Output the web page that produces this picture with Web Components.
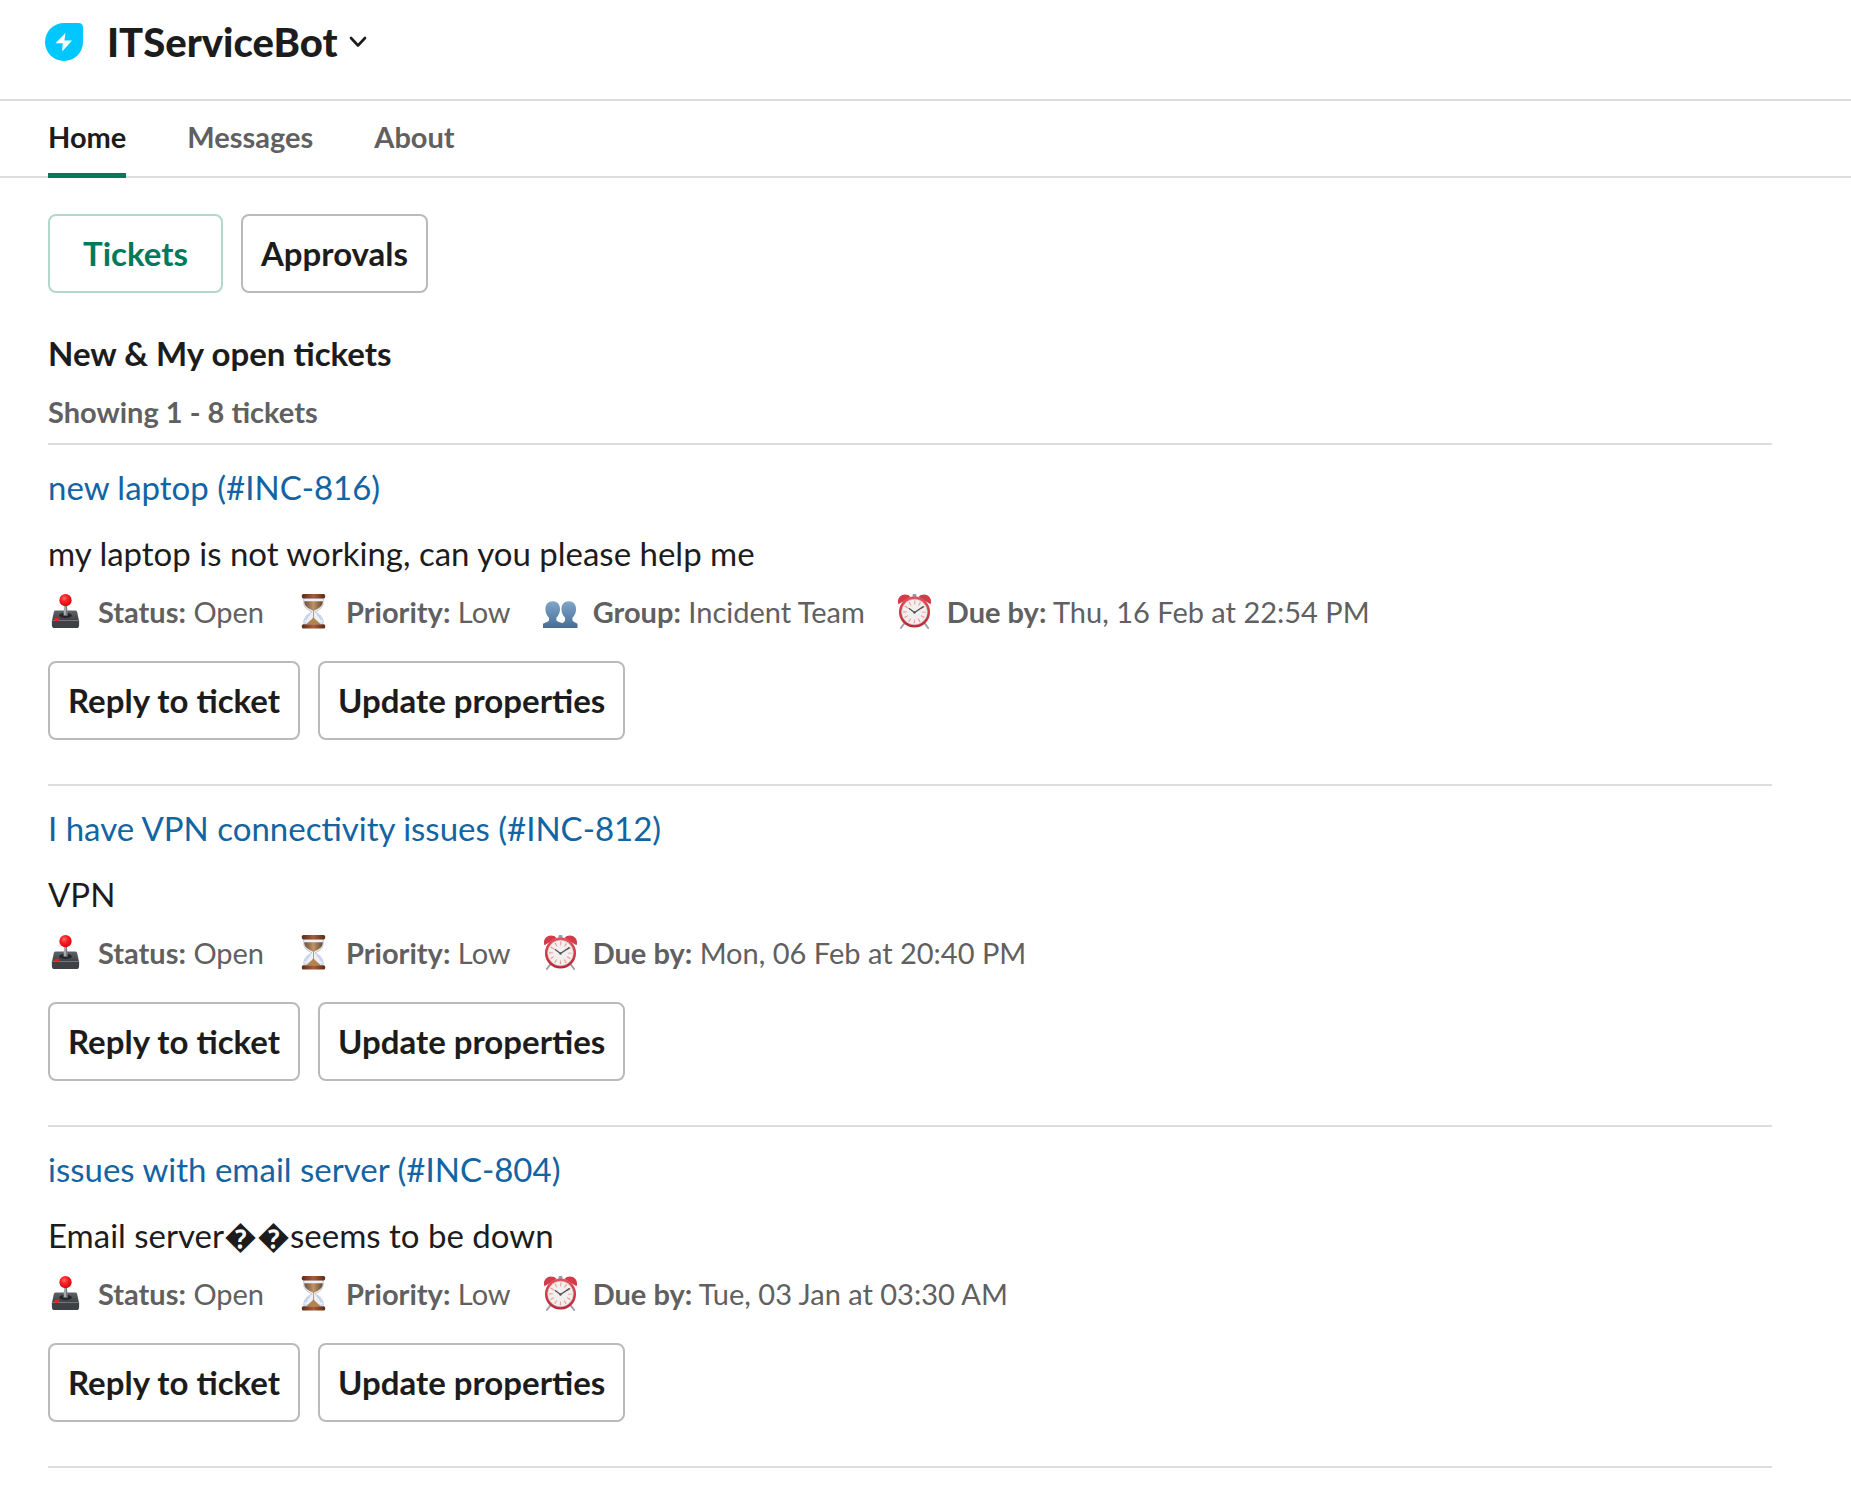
<!DOCTYPE html>
<html lang="en">
<head>
<meta charset="utf-8">
<meta name="viewport" content="width=device-width, initial-scale=1">
<title>ITServiceBot</title>
<style>
  body {
    margin: 0;
    background: #fff;
    color: #1d1c1d;
    font-family: Lato, "Noto Sans", sans-serif;
    font-size: 33px;
    line-height: 47px;
    --muted: #616061;
    --line: #dddddd;
    --green: #007a5a;
    --link: #1264a3;
  }
</style>
</head>
<body>
<bot-app>
  <bot-header slot="header">ITServiceBot</bot-header>
  <bot-tabs slot="tabs">
    <bot-tab active>Home</bot-tab>
    <bot-tab>Messages</bot-tab>
    <bot-tab>About</bot-tab>
  </bot-tabs>
  <button-row>
    <bot-button primary>Tickets</bot-button>
    <bot-button>Approvals</bot-button>
  </button-row>
  <list-heading>New &amp; My open tickets<span slot="count">Showing 1 - 8 tickets</span></list-heading>
  <ticket-item>
    <span slot="title">new laptop (#INC-816)</span>
    my laptop is not working, can you please help me
    <ticket-field slot="fields" icon="joystick" label="Status:">Open</ticket-field>
    <ticket-field slot="fields" icon="hourglass" label="Priority:">Low</ticket-field>
    <ticket-field slot="fields" icon="group" label="Group:">Incident Team</ticket-field>
    <ticket-field slot="fields" icon="clock" label="Due by:">Thu, 16 Feb at 22:54 PM</ticket-field>
  </ticket-item>
  <ticket-item>
    <span slot="title">I have VPN connectivity issues (#INC-812)</span>
    VPN
    <ticket-field slot="fields" icon="joystick" label="Status:">Open</ticket-field>
    <ticket-field slot="fields" icon="hourglass" label="Priority:">Low</ticket-field>
    <ticket-field slot="fields" icon="clock" label="Due by:">Mon, 06 Feb at 20:40 PM</ticket-field>
  </ticket-item>
  <ticket-item>
    <span slot="title">issues with email server (#INC-804)</span>
    Email server&#xFFFD;&#xFFFD;seems to be down
    <ticket-field slot="fields" icon="joystick" label="Status:">Open</ticket-field>
    <ticket-field slot="fields" icon="hourglass" label="Priority:">Low</ticket-field>
    <ticket-field slot="fields" icon="clock" label="Due by:">Tue, 03 Jan at 03:30 AM</ticket-field>
  </ticket-item>
</bot-app>

<script>
const define = (name, html, setup) => {
  const template = document.createElement('template');
  template.innerHTML = html;
  customElements.define(name, class extends HTMLElement {
    constructor() {
      super();
      this.attachShadow({ mode: 'open' }).append(template.content.cloneNode(true));
    }
    connectedCallback() { if (setup) setup(this, this.shadowRoot); }
  });
};

const ICONS = {
  joystick: `
    <defs>
      <radialGradient id="ball" cx=".4" cy=".35" r=".7"><stop offset="0" stop-color="#ff6a6a"/><stop offset=".4" stop-color="#fb2024"/><stop offset="1" stop-color="#d0060d"/></radialGradient>
      <linearGradient id="base" x2="0" y2="1"><stop offset="0" stop-color="#606469"/><stop offset="1" stop-color="#3b3e43"/></linearGradient>
    </defs>
    <path d="M8 17h20q1.600 0 2 1.500l2 9.500H4l2-9.500Q6.400 17 8 17z" fill="url(#base)"/>
    <path d="M4 27h28v4.500q0 3.500-2.500 3.500h-23Q4 35 4 31.500z" fill="#3d4045"/>
    <path d="M4 27.300h28" stroke="#777b80"/>
    <ellipse cx="18" cy="22" rx="6.500" ry="2.800" fill="#24262a"/>
    <path d="M16.600 10h2.800l.6 12h-4z" fill="#a6abb0"/><path d="M18.500 10h.9l.6 12h-1.500z" fill="#74797e"/>
    <ellipse cx="9" cy="26" rx="2.800" ry="1.700" fill="#f01c20"/>
    <circle cx="18" cy="6.300" r="6.300" fill="url(#ball)"/>`,
  hourglass: `
    <defs>
      <linearGradient id="wood"><stop offset="0" stop-color="#5c2b17"/><stop offset=".5" stop-color="#a65d38"/><stop offset="1" stop-color="#5c2b17"/></linearGradient>
      <linearGradient id="sand"><stop offset="0" stop-color="#6f5039"/><stop offset=".5" stop-color="#bd9368"/><stop offset="1" stop-color="#68482d"/></linearGradient>
    </defs>
    <path d="M8 4h20v4.500c0 5-3.500 7.500-8.500 10 5 2.500 8.500 5.500 8.500 11.500H8c0-6 3.500-9 8.500-11.500C11.500 16 8 13.500 8 8.500z" fill="#edf1f7" stroke="#b8c5d8"/>
    <path d="M8.500 7.500h19c0 5-3.500 7-8.500 9.500h-2c-5-2.500-8.500-4.500-8.500-9.500z" fill="url(#sand)"/>
    <path d="M17.600 16h.8v8c.6 2.500 4 3.500 6.600 7H11c2.600-3.500 6-4.500 6.600-7z" fill="#b38450"/>
    <path d="M10 27q1-4 4.500-6.500M26 27q-1-4-4.500-6.500" stroke="#bdd0ee" fill="none" stroke-width="1.500"/>
    <rect x="6" y="0" width="24" height="4.500" rx="1.600" fill="url(#wood)"/>
    <rect x="6" y="31" width="24" height="4.500" rx="1.600" fill="url(#wood)"/>`,
  group: `
    <defs><linearGradient id="blue" x2="0" y2="1" ><stop offset="0" stop-color="#7fa7c9"/><stop offset="1" stop-color="#466c95"/></linearGradient></defs>
    <path d="M10 7.500c4.500 0 7.500 3 7.500 8 0 4-1.500 7-3.700 8.800v2.200c0 2 3 2 6.200 3.500V35H0v-4.500c3-1.500 6.200-2 6.200-4v-2.200C4 22.500 2.500 19.500 2.500 15.500c0-5 3-8 7.500-8z" fill="url(#blue)"/>
    <path d="M26.500 7.500c4.500 0 7.500 3 7.500 8 0 4-1.500 7-3.700 8.800v2.200c0 2 2.700 2.500 5.200 4V35H19v-4.500c2-1.500 3.700-2 3.700-4v-2.200C20.500 22.500 19 19.500 19 15.500c0-5 3-8 7.500-8z" fill="url(#blue)"/>`,
  clock: `
    <defs>
      <linearGradient id="rim" x2="0" y2="1"><stop offset="0" stop-color="#e4505b"/><stop offset="1" stop-color="#b92836"/></linearGradient>
    </defs>
    <path d="M8.500 29l-4.500 6M27.500 29l4.500 6" stroke="#9fa1a5" stroke-width="2" stroke-linecap="round"/>
    <rect x="16" y="0" width="4" height="4" rx="1" fill="#8e9eab"/>
    <path d="M1.500 10.500C-.5 5 3.500.5 8 .5q4 0 6 2.500zM34.500 10.500C36.500 5 32.500.5 28 .5q-4 0-6 2.500z" fill="#d23c4a"/>
    <circle cx="18" cy="18.500" r="16" fill="url(#rim)"/>
    <circle cx="18" cy="18.500" r="13.200" fill="#f1f0ee" stroke="#c8c3c3" stroke-width=".6"/>
    <circle cx="18" cy="18.500" r="9.700" fill="none" stroke="#ee9793" stroke-width="4" stroke-dasharray="1.100 3.979" stroke-dashoffset=".55"/>
    <path d="M12.500 15l5.500 4 9-6" fill="none" stroke="#4f5357" stroke-width="1.300" stroke-linecap="round" stroke-linejoin="round"/>
    <circle cx="18" cy="19" r="1.200" fill="#4f5357"/>`
};

define('bot-app', `
  <style>
    :host { display: block; }
    main { padding: 36px 79px 0 48px; }
  </style>
  <slot name="header"></slot>
  <slot name="tabs"></slot>
  <main><slot></slot></main>`);

define('bot-header', `
  <style>
    :host { display: block; }
    header { display: flex; align-items: center; padding: 18px 45px 33px; border-bottom: 2px solid var(--line); }
    .logo { width: 38px; height: 38px; margin-right: 24px; }
    h1 { margin: 0; font-size: 40px; line-height: 48px; font-weight: 900; }
    button { display: flex; margin: 0; padding: 0; border: 0; background: none; color: inherit; font: inherit; align-items: center; gap: 10px; }
    .chevron { width: 20px; height: 14px; }
  </style>
  <header>
    <svg class="logo" viewBox="0 0 38 38" aria-hidden="true">
      <path d="M19 0h14.500Q38 0 38 4.500V19A19 19 0 1 1 19 0z" fill="#00c7ff"/>
      <path d="M20.500 10L10.500 20.300h7.200L17.200 28.500 27 17.500h-7.600z" fill="#fff"/>
    </svg>
    <h1><button type="button"><slot></slot>
      <svg class="chevron" viewBox="0 0 20 14" aria-hidden="true"><path d="M3 3l7 7.500 7-7.500" fill="none" stroke="#1d1c1d" stroke-width="2.600" stroke-linecap="round" stroke-linejoin="round"/></svg>
    </button></h1>
  </header>`);

define('bot-tabs', `
  <style>
    :host { display: block; }
    nav { display: flex; gap: 61px; padding: 0 48px; box-shadow: inset 0 -2px var(--line); }
  </style>
  <nav><slot></slot></nav>`);

define('bot-tab', `
  <style>
    :host { display: block; }
    a { display: block; padding: 16px 0; border-bottom: 5px solid transparent; color: var(--muted); font-size: 29px; line-height: 40px; font-weight: 700; text-decoration: none; }
    :host([active]) a { color: #1d1c1d; border-color: var(--green); }
  </style>
  <a href="#"><slot></slot></a>`);

define('button-row', `
  <style>:host { display: flex; gap: 18px; }</style>
  <slot></slot>`);

define('bot-button', `
  <style>
    :host { display: block; }
    button { display: block; margin: 0; padding: 14px 18px; border: 2px solid #bbbabb; border-radius: 8px; background: #fff; color: #1d1c1d; font: inherit; font-weight: 700; white-space: nowrap; }
    :host([primary]) button { padding: 14px 33px; border-color: #b2d7cd; color: var(--green); }
  </style>
  <button type="button"><slot></slot></button>`);

define('list-heading', `
  <style>
    :host { display: block; padding: 37px 0 11px; font-weight: 700; }
    h2 { margin: 0 0 15px; font-size: inherit; font-weight: inherit; }
    p { margin: 0; font-size: 29px; line-height: 40px; color: var(--muted); }
  </style>
  <h2><slot></slot></h2>
  <p><slot name="count"></slot></p>`);

define('ticket-item', `
  <style>
    :host { display: block; border-top: 2px solid var(--line); padding: 19px 0 44px; }
    :host(:last-of-type) { border-bottom: 2px solid var(--line); }
    h3 { margin: 0 0 19px; font-size: inherit; font-weight: 400; }
    a { color: var(--link); text-decoration: none; }
    p { margin: 0 0 15px; }
    .fields { display: flex; flex-wrap: wrap; gap: 32px; margin-bottom: 29px; }
  </style>
  <h3><a href="#"><slot name="title"></slot></a></h3>
  <p><slot></slot></p>
  <div class="fields"><slot name="fields"></slot></div>
  <button-row>
    <bot-button>Reply to ticket</bot-button>
    <bot-button>Update properties</bot-button>
  </button-row>`);

define('ticket-field', `
  <style>
    :host { display: flex; font-size: 29px; line-height: 40px; color: var(--muted); }
    svg { width: 35px; height: 35px; margin: 2px 15px 0 0; }
  </style>
  <svg viewBox="0 0 36 36" aria-hidden="true"></svg>
  <span><b></b> <slot></slot></span>`,
  (host, root) => {
    root.querySelector('svg').innerHTML = ICONS[host.getAttribute('icon')];
    root.querySelector('b').textContent = host.getAttribute('label');
  });
</script>
</body>
</html>
